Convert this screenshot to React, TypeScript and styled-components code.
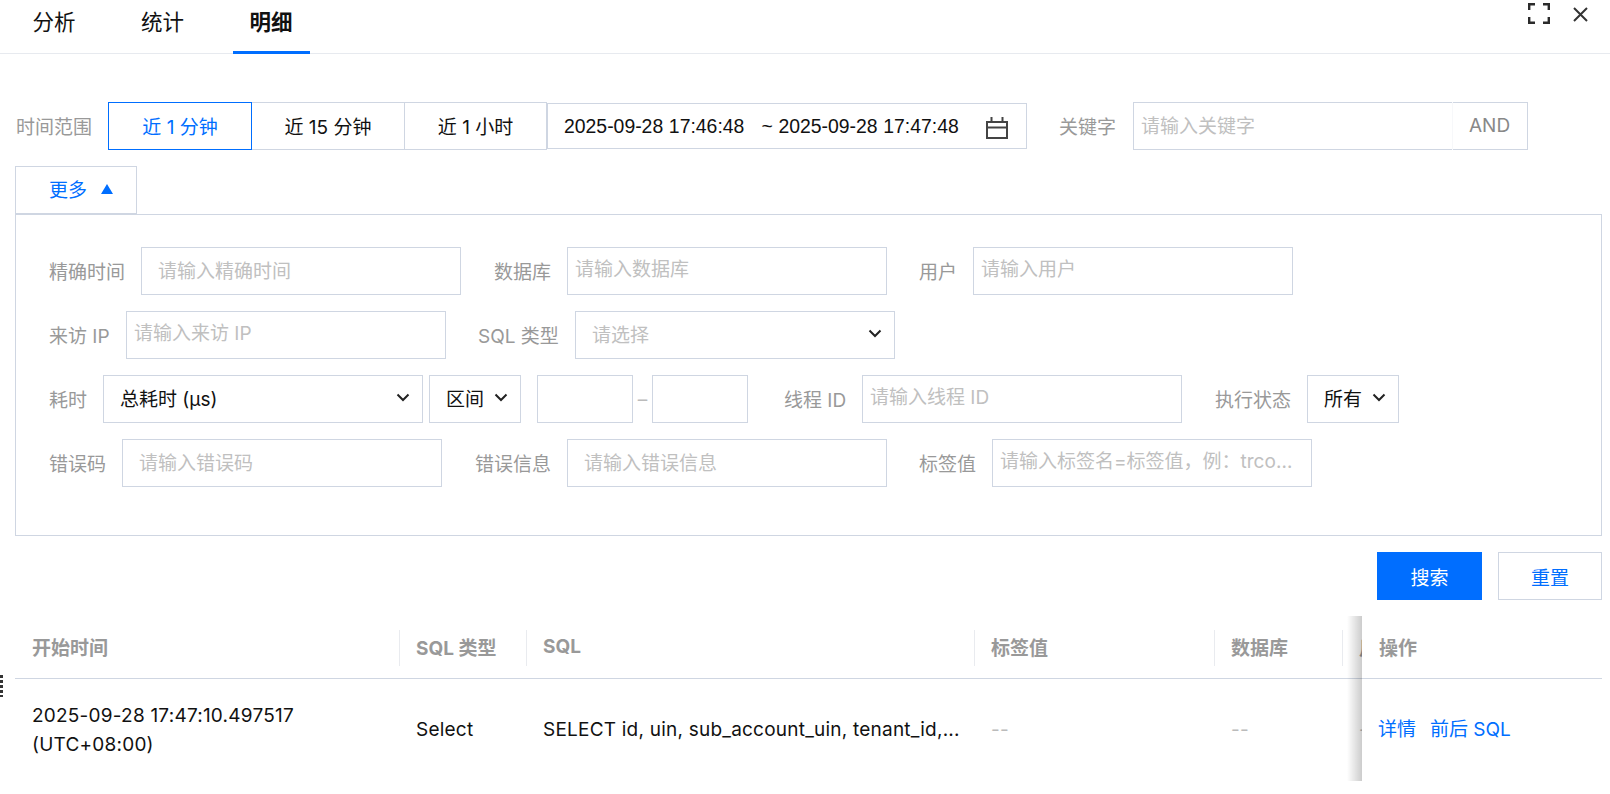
import React from "react";
import styled, { createGlobalStyle } from "styled-components";

const BORDER = "#cfd6e2";
const BLUE = "#006eff";
const PLACEHOLDER = "#c0c0c0";
const SANS = `Inter, "Noto Sans CJK SC", sans-serif`;

const Global = createGlobalStyle`
  html, body { margin: 0; padding: 0; background: #fff; overflow: hidden; }
  body { font-family: ${SANS}; font-size: 19px; color: #111; }
  * { box-sizing: border-box; }
`;

const Page = styled.div`
  position: relative;
  width: 1610px;
  height: 794px;
  overflow: hidden;
`;

const TabBar = styled.div`
  display: flex;
  justify-content: space-between;
  height: 54px;
  padding-left: 15.5px;
  border-bottom: 1px solid #e7eaef;
`;
const Tabs = styled.div`
  display: flex;
  gap: 31.5px;
`;
const Tab = styled.div<{ $active?: boolean }>`
  width: 77px;
  height: 54px;
  padding-bottom: 10px;
  display: flex;
  align-items: center;
  justify-content: center;
  font-size: 21.5px;
  font-weight: ${(p) => (p.$active ? 700 : 400)};
  color: #111;
  border-bottom: 3px solid ${(p) => (p.$active ? BLUE : "transparent")};
`;
const WindowTools = styled.div`
  display: flex;
  align-items: flex-start;
  gap: 23px;
  padding: 3px 22px 0 0;
`;
const IconSvg = styled.svg`
  display: block;
  flex: none;
`;
const CloseSvg = styled(IconSvg)`
  margin-top: 4px;
`;
const CalendarSvg = styled(IconSvg)`
  margin-top: 3px;
  margin-right: -1px;
`;

const TimeRow = styled.div`
  display: flex;
  align-items: center;
  margin-top: 48px;
  padding-left: 16px;
  height: 48px;
`;
const TimeLabel = styled.div`
  width: 93px;
  padding-bottom: 2px;
  color: #999;
  white-space: nowrap;
`;
const Seg = styled.div<{ $w: number; $active?: boolean }>`
  width: ${(p) => p.$w}px;
  height: 48px;
  margin-left: -1px;
  padding-bottom: 2px;
  display: flex;
  align-items: center;
  justify-content: center;
  border: 1px solid ${(p) => (p.$active ? BLUE : BORDER)};
  color: ${(p) => (p.$active ? BLUE : "#111")};
  position: relative;
  z-index: ${(p) => (p.$active ? 1 : 0)};
  white-space: nowrap;
`;
const DatePicker = styled.div`
  width: 480px;
  height: 46px;
  padding: 0 19px 0 16px;
  display: flex;
  align-items: center;
  border: 1px solid ${BORDER};
  font-family: "Liberation Sans", sans-serif;
  font-size: 19.4px;
  word-spacing: 0.3px;
  color: #111;
  white-space: nowrap;
`;
const DateText = styled.span`
  flex: 1;
  white-space: pre;
`;
const KeywordLabel = styled.div`
  margin-left: 32px;
  width: 74px;
  padding-bottom: 2px;
  color: #999;
`;
const KeywordBox = styled.div`
  width: 395px;
  height: 48px;
  display: flex;
  border: 1px solid ${BORDER};
`;
const KeywordPlaceholder = styled.div`
  width: 319px;
  margin: -1px 0;
  padding: 0 0 4px 7px;
  display: flex;
  align-items: center;
  color: ${PLACEHOLDER};
  border-right: 1px solid #f7f8fa;
`;
const AndTag = styled.div`
  flex: 1;
  padding: 0 0 2px 16px;
  display: flex;
  align-items: center;
  color: #888;
`;

const MoreTab = styled.div`
  width: 122px;
  height: 48px;
  margin: 16px 0 0 15px;
  padding: 0 0 3px 33px;
  display: flex;
  align-items: center;
  gap: 14px;
  color: ${BLUE};
  border: 1px solid ${BORDER};
`;
const Triangle = styled.span`
  width: 0;
  height: 0;
  border-left: 6.5px solid transparent;
  border-right: 6.5px solid transparent;
  border-bottom: 10px solid ${BLUE};
`;
const Panel = styled.div`
  width: 1587px;
  height: 322px;
  margin-left: 15px;
  padding: 32px 0 0 33px;
  border: 1px solid ${BORDER};
  display: flex;
  flex-direction: column;
  gap: 16px;
`;
const FilterRow = styled.div`
  display: flex;
  align-items: center;
  height: 48px;
`;
const FieldLabel = styled.div<{ $w: number; $ml?: number }>`
  width: ${(p) => p.$w}px;
  margin-left: ${(p) => p.$ml ?? 0}px;
  padding-bottom: 2px;
  flex: none;
  color: #999;
  white-space: nowrap;
`;
const TextBox = styled.div<{ $w?: number; $wide?: boolean; $ml?: number; $pr?: number }>`
  width: ${(p) => p.$w ?? 320}px;
  height: 48px;
  margin-left: ${(p) => p.$ml ?? 0}px;
  padding-left: ${(p) => (p.$wide ? 16 : 7)}px;
  padding-right: ${(p) => p.$pr ?? (p.$wide ? 16 : 7)}px;
  flex: none;
  line-height: ${(p) => (p.$wide ? 48 : 43)}px;
  border: 1px solid ${BORDER};
  color: ${PLACEHOLDER};
  white-space: nowrap;
  overflow: hidden;
  text-overflow: ellipsis;
`;
const SelectBox = styled.div<{ $w: number; $ml?: number; $muted?: boolean }>`
  width: ${(p) => p.$w}px;
  height: 48px;
  margin-left: ${(p) => p.$ml ?? 0}px;
  padding: 0 12px 3px 16px;
  flex: none;
  display: flex;
  align-items: center;
  justify-content: space-between;
  border: 1px solid ${BORDER};
  color: ${(p) => (p.$muted ? PLACEHOLDER : "#111")};
  white-space: nowrap;
`;
const RangeDash = styled.div`
  width: 19px;
  flex: none;
  display: flex;
  justify-content: center;
  color: #bbb;
`;

const ActionRow = styled.div`
  display: flex;
  justify-content: flex-end;
  gap: 16px;
  width: 1602px;
  margin-top: 16px;
`;
const PrimaryButton = styled.div`
  width: 105px;
  height: 48px;
  display: flex;
  align-items: center;
  justify-content: center;
  background: ${BLUE};
  color: #fff;
`;
const GhostButton = styled.div`
  width: 104px;
  height: 48px;
  display: flex;
  align-items: center;
  justify-content: center;
  border: 1px solid ${BORDER};
  color: ${BLUE};
`;

const TableWrap = styled.div`
  display: flex;
  width: 1587px;
  height: 165px;
  margin: 16px 0 0 15px;
`;
const Scroller = styled.div`
  width: 1347px;
  flex: none;
  overflow: hidden;
`;
const ColGrid = styled.div`
  display: grid;
  grid-template-columns: 384px 127px 448px 240px 128px 160px;
  grid-template-rows: 63px 1fr;
  width: 1487px;
  height: 165px;
`;
const HeadCell = styled.div`
  height: 63px;
  display: flex;
  align-items: center;
  border-bottom: 1px solid ${BORDER};
  padding-top: 1px;
`;
const HeadInner = styled.div<{ $first?: boolean }>`
  height: 36px;
  width: 100%;
  display: flex;
  align-items: center;
  padding: 0 0 3px 16px;
  border-left: 1px solid ${(p) => (p.$first ? "transparent" : "#e9ebef")};
  font-weight: 700;
  color: #999;
  white-space: nowrap;
`;
const BodyCell = styled.div<{ $muted?: boolean }>`
  padding: 1px 0 0 17px;
  margin-top: -1px;
  height: 103px;
  display: flex;
  align-items: center;
  line-height: 29.5px;
  letter-spacing: 0.22px;
  color: ${(p) => (p.$muted ? "#bbb" : "#111")};
  white-space: nowrap;
  overflow: hidden;
`;
const FixedCol = styled.div`
  position: relative;
  flex: 1;
  background: #fff;
  &::before {
    content: "";
    position: absolute;
    top: 0;
    bottom: 0;
    left: -15px;
    width: 15px;
    background: linear-gradient(to left, rgba(0, 0, 0, 0.2), rgba(0, 0, 0, 0));
  }
`;
const LinkRow = styled.div`
  display: flex;
  gap: 14px;
  margin-left: -1px;
  letter-spacing: 0;
  color: ${BLUE};
  white-space: nowrap;
`;
const DragHandle = styled.div`
  position: absolute;
  left: 0;
  top: 675px;
  width: 3px;
  height: 22px;
  background: repeating-linear-gradient(to bottom, #333 0 3px, transparent 3px 5px);
`;

const Chevron = () => (
  <IconSvg width="14" height="9" viewBox="0 0 14 9" fill="none">
    <path d="M1.5 1.5 7 7l5.5-5.5" stroke="#222" strokeWidth="2" />
  </IconSvg>
);

const Calendar = () => (
  <CalendarSvg width="22" height="22" viewBox="0 0 22 22" fill="none">
    <path d="M1 5h20v16H1zM1 10.5h20M5.5 0v5M16.5 0v5" stroke="#444" strokeWidth="2" />
  </CalendarSvg>
);

const Fullscreen = () => (
  <IconSvg width="22" height="21" viewBox="0 0 22 21" fill="none">
    <path d="M1.2 7V1.2h5.8M15 1.2h5.8V7M20.8 14v5.8H15M7 19.8H1.2V14" stroke="#2b2b2b" strokeWidth="2.4" />
  </IconSvg>
);

const CloseIcon = () => (
  <CloseSvg width="15" height="15" viewBox="0 0 15 15" fill="none">
    <path d="M1 1l13 13M14 1 1 14" stroke="#333" strokeWidth="2" />
  </CloseSvg>
);

export default function App() {
  return (
    <Page>
      <Global />
      <TabBar>
        <Tabs>
          <Tab>分析</Tab>
          <Tab>统计</Tab>
          <Tab $active>明细</Tab>
        </Tabs>
        <WindowTools>
          <Fullscreen />
          <CloseIcon />
        </WindowTools>
      </TabBar>

      <TimeRow>
        <TimeLabel>时间范围</TimeLabel>
        <Seg $w={144} $active>近 1 分钟</Seg>
        <Seg $w={154}>近 15 分钟</Seg>
        <Seg $w={143}>近 1 小时</Seg>
        <DatePicker>
          <DateText>2025-09-28 17:46:48   ~ 2025-09-28 17:47:48</DateText>
          <Calendar />
        </DatePicker>
        <KeywordLabel>关键字</KeywordLabel>
        <KeywordBox>
          <KeywordPlaceholder>请输入关键字</KeywordPlaceholder>
          <AndTag>AND</AndTag>
        </KeywordBox>
      </TimeRow>

      <MoreTab>
        更多
        <Triangle />
      </MoreTab>
      <Panel>
        <FilterRow>
          <FieldLabel $w={92}>精确时间</FieldLabel>
          <TextBox $wide>请输入精确时间</TextBox>
          <FieldLabel $w={73} $ml={33}>数据库</FieldLabel>
          <TextBox>请输入数据库</TextBox>
          <FieldLabel $w={54} $ml={32}>用户</FieldLabel>
          <TextBox>请输入用户</TextBox>
        </FilterRow>
        <FilterRow>
          <FieldLabel $w={77}>来访 IP</FieldLabel>
          <TextBox>请输入来访 IP</TextBox>
          <FieldLabel $w={97} $ml={32}>SQL 类型</FieldLabel>
          <SelectBox $w={320} $muted>
            请选择
            <Chevron />
          </SelectBox>
        </FilterRow>
        <FilterRow>
          <FieldLabel $w={54}>耗时</FieldLabel>
          <SelectBox $w={320}>
            总耗时 (μs)
            <Chevron />
          </SelectBox>
          <SelectBox $w={92} $ml={6}>
            区间
            <Chevron />
          </SelectBox>
          <TextBox $w={96} $ml={16} />
          <RangeDash>–</RangeDash>
          <TextBox $w={96} />
          <FieldLabel $w={78} $ml={36}>线程 ID</FieldLabel>
          <TextBox>请输入线程 ID</TextBox>
          <FieldLabel $w={92} $ml={33}>执行状态</FieldLabel>
          <SelectBox $w={92}>
            所有
            <Chevron />
          </SelectBox>
        </FilterRow>
        <FilterRow>
          <FieldLabel $w={73}>错误码</FieldLabel>
          <TextBox $wide>请输入错误码</TextBox>
          <FieldLabel $w={92} $ml={33}>错误信息</FieldLabel>
          <TextBox $wide>请输入错误信息</TextBox>
          <FieldLabel $w={73} $ml={32}>标签值</FieldLabel>
          <TextBox $pr={18}>{"请输入标签名=标签值\uFF0C例\uFF1Atrcoll=value"}</TextBox>
        </FilterRow>
      </Panel>

      <ActionRow>
        <PrimaryButton>搜索</PrimaryButton>
        <GhostButton>重置</GhostButton>
      </ActionRow>

      <TableWrap>
        <Scroller>
          <ColGrid>
            <HeadCell><HeadInner $first>开始时间</HeadInner></HeadCell>
            <HeadCell><HeadInner>SQL 类型</HeadInner></HeadCell>
            <HeadCell><HeadInner>SQL</HeadInner></HeadCell>
            <HeadCell><HeadInner>标签值</HeadInner></HeadCell>
            <HeadCell><HeadInner>数据库</HeadInner></HeadCell>
            <HeadCell><HeadInner>用户</HeadInner></HeadCell>
            <BodyCell>
              <div>
                2025-09-28 17:47:10.497517
                <br />
                (UTC+08:00)
              </div>
            </BodyCell>
            <BodyCell>Select</BodyCell>
            <BodyCell>SELECT id, uin, sub_account_uin, tenant_id,...</BodyCell>
            <BodyCell $muted>--</BodyCell>
            <BodyCell $muted>--</BodyCell>
            <BodyCell $muted>--</BodyCell>
          </ColGrid>
        </Scroller>
        <FixedCol>
          <HeadCell><HeadInner $first>操作</HeadInner></HeadCell>
          <BodyCell>
            <LinkRow>
              <span>详情</span>
              <span>前后 SQL</span>
            </LinkRow>
          </BodyCell>
        </FixedCol>
      </TableWrap>
      <DragHandle />
    </Page>
  );
}
